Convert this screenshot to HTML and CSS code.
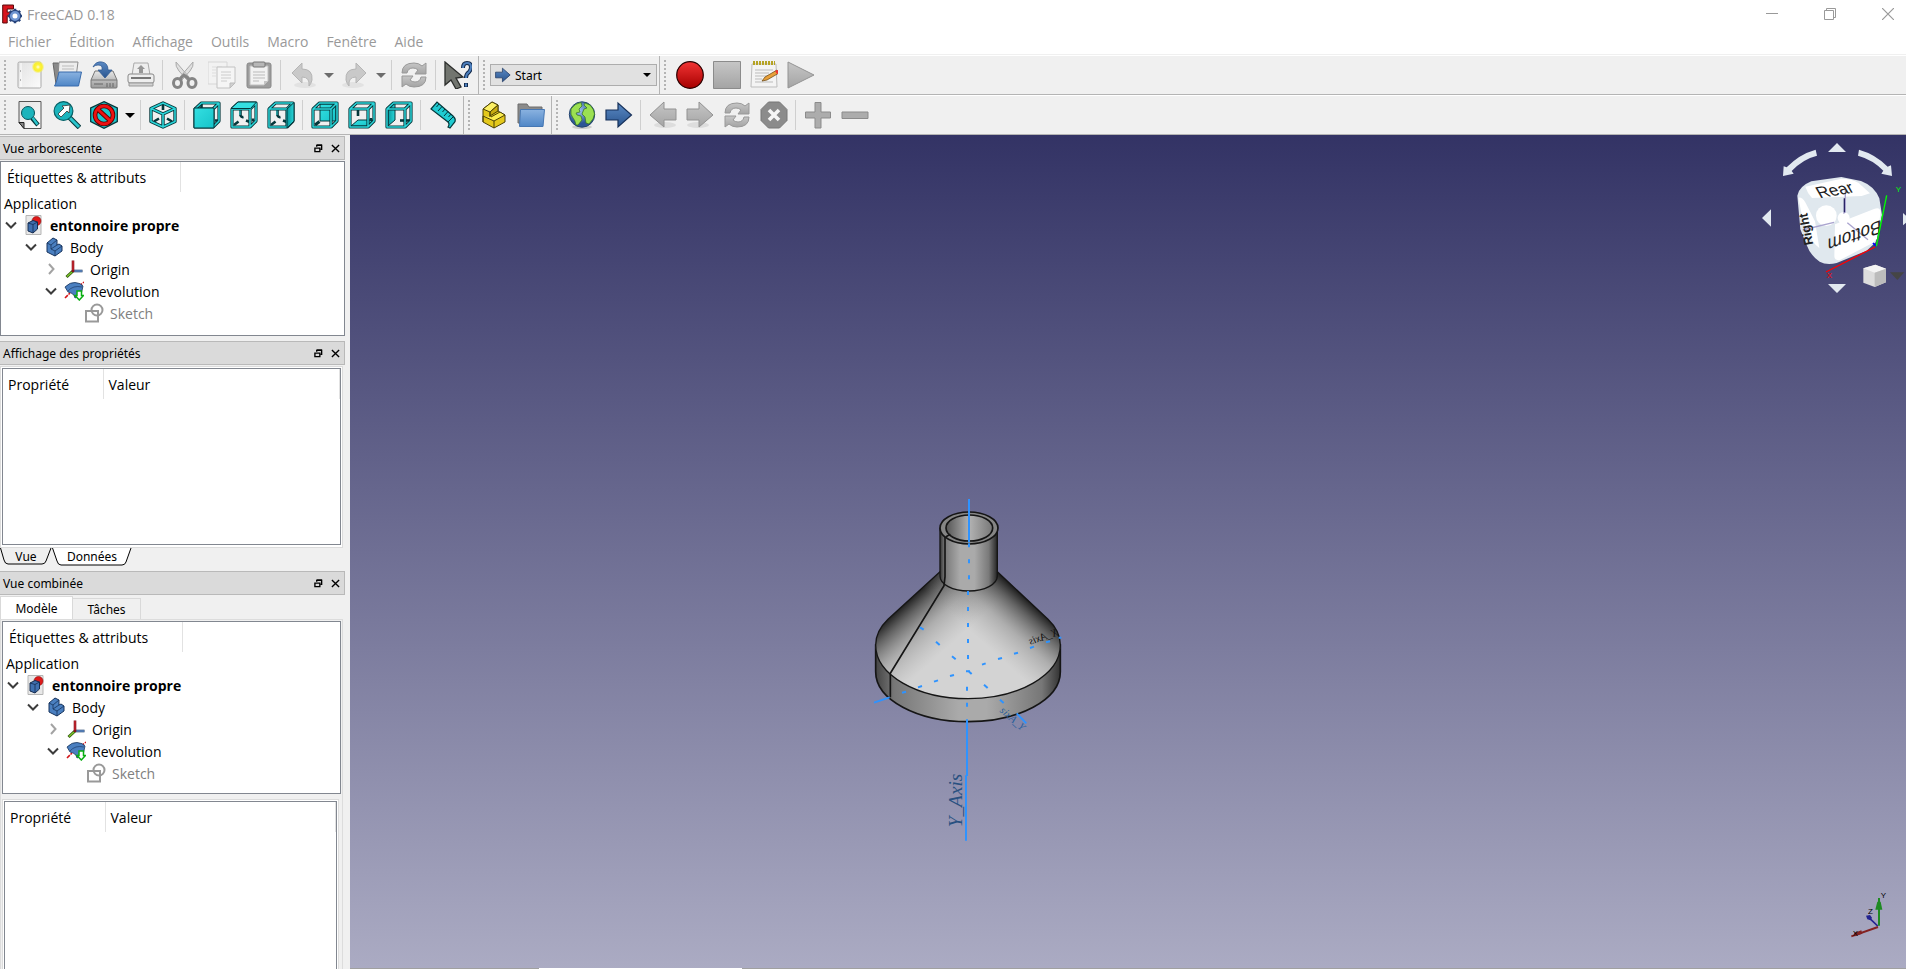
FILE: index.html
```html
<!DOCTYPE html>
<html lang="fr">
<head>
<meta charset="utf-8">
<title>FreeCAD 0.18</title>
<link rel="stylesheet" href="styles.css">
</head>
<body>
<svg class="defs" aria-hidden="true">
  <defs>
    <linearGradient id="paper" x1="0" y1="0" x2="1" y2="1"><stop offset="0" stop-color="#e2e2e2"/><stop offset="1" stop-color="#fbfbfb"/></linearGradient>
    <linearGradient id="grey" x1="0" y1="0" x2="0" y2="1"><stop offset="0" stop-color="#c6c6c6"/><stop offset="1" stop-color="#a4a4a4"/></linearGradient>
    <linearGradient id="drive" x1="0" y1="0" x2="0" y2="1"><stop offset="0" stop-color="#e6e6e6"/><stop offset="1" stop-color="#9a9a9a"/></linearGradient>
    <linearGradient id="blue" x1="0" y1="0" x2="0" y2="1"><stop offset="0" stop-color="#8ab2e0"/><stop offset="1" stop-color="#4f86c6"/></linearGradient>
    <linearGradient id="deep" x1="0" y1="0" x2="0" y2="1"><stop offset="0" stop-color="#5b8ac4"/><stop offset="1" stop-color="#2a558f"/></linearGradient>
    <linearGradient id="red" x1="0" y1="0" x2="0" y2="1"><stop offset="0" stop-color="#f23434"/><stop offset="1" stop-color="#a60000"/></linearGradient>
    <linearGradient id="cyan" x1="0" y1="0" x2="1" y2="1"><stop offset="0" stop-color="#34e0e2"/><stop offset="1" stop-color="#16c3c9"/></linearGradient>
    <linearGradient id="teal" x1="0" y1="0" x2="1" y2="0"><stop offset="0" stop-color="#069a9e"/><stop offset="1" stop-color="#2bd5d9"/></linearGradient>
    <radialGradient id="sun"><stop offset="0" stop-color="#fffde0"/><stop offset=".35" stop-color="#fdf33c"/><stop offset=".65" stop-color="#f8ee30"/><stop offset="1" stop-color="#f8f060" stop-opacity="0"/></radialGradient>
    <radialGradient id="sea" cx=".4" cy=".35"><stop offset="0" stop-color="#9fc3f2"/><stop offset="1" stop-color="#2c5596"/></radialGradient>

    <symbol id="logo" viewBox="0 0 20 20"><path d="M.7 1h10.8v4H5.2v3.2h4.3v3.6H5.2V19H.7z" fill="#d8151d" stroke="#5b0a0c"/><circle cx="13" cy="12" r="4.2" fill="none" stroke="#27447c" stroke-width="4"/><path d="M13 4.800v14.400M5.800 12h14.400M7.900 6.900l10.200 10.200M18.100 6.900 7.900 17.100" stroke="#27447c" stroke-width="2.600"/><circle cx="13" cy="12" r="3.800" fill="#fff" stroke="#6f95d2" stroke-width="2.600"/></symbol>
    <symbol id="new" viewBox="0 0 28 28"><rect x="2" y="1" width="23" height="26" rx="1.500" fill="url(#paper)" stroke="#aaa"/><path d="M5 2v24" stroke="#fff"/><path d="M4 10h1M4 19h1" stroke="#777"/><circle cx="22" cy="6" r="6.500" fill="url(#sun)"/></symbol>
    <symbol id="open" viewBox="0 0 30 28"><path d="M1 2h5l2 2h14v19H4z" fill="#8a8a8a" stroke="#666"/><path d="M7 1h19l-2 15H6z" fill="#ededed" stroke="#8b8b8b"/><path d="M10 5h12M10 8h12" stroke="#bbb"/><path d="M7 11h22.500l-3 14H2.500q2-3 4.500-14z" fill="url(#blue)" stroke="#396bac"/></symbol>
    <symbol id="save" viewBox="0 0 28 28"><path d="M5 10h18l4 9v7q0 1-1 1H2q-1 0-1-1v-7z" fill="url(#drive)" stroke="#777"/><path d="M1 19h26" stroke="#777"/><path d="M4 23h9M17 22v4M20 22v4M23 22v4" stroke="#666"/><path d="M3 6Q6 0 12 1q6 1 6 8h4l-7 8-7-8h4q1-5-4-5-3 0-5 2z" fill="url(#deep)" stroke="#315b93" stroke-width=".8"/></symbol>
    <symbol id="print" viewBox="0 0 28 28"><path d="M5 14 7 2h14l2 12z" fill="#eee" stroke="#aaa"/><path d="m14 4 4 4h-2v4h-4V8h-2z" fill="#969696"/><rect x="1" y="13" width="26" height="9" rx="2" fill="#eee" stroke="#888"/><path d="M4 17h20" stroke="#777" stroke-width="2"/><path d="M2 22h24v3H2z" fill="#d2d2d2" stroke="#999"/></symbol>
    <symbol id="cut" viewBox="0 0 28 28"><path d="M5 1q-1 4 3 9l8 9 2-3zM22 1q1 4-3 9l-8 9-2-3z" fill="#e0e0e0" stroke="#aaa"/><ellipse cx="6.500" cy="22" rx="4" ry="4.500" fill="none" stroke="#858585" stroke-width="3"/><ellipse cx="21" cy="22" rx="4" ry="4.500" fill="none" stroke="#858585" stroke-width="3"/><path d="m9 18 4-4 5 4" fill="none" stroke="#858585" stroke-width="3"/></symbol>
    <symbol id="copy" viewBox="0 0 28 28"><path d="M0 1h19v22H0z" fill="#f2f2f2" stroke="#d6d6d6"/><path d="M4 6h10M4 9h4M4 12h4M4 15h4" stroke="#ddd"/><path d="M9 6h18v16l-5 5H9z" fill="#f5f5f5" stroke="#c2c2c2"/><path d="M13 11h10M13 14h10M13 17h10M13 20h6" stroke="#ccc"/><path d="M22 27v-5h5z" fill="#d0d0d0" stroke="#bbb"/></symbol>
    <symbol id="paste" viewBox="0 0 28 28"><rect x="2" y="2" width="24" height="25" rx="2" fill="#9d9d9d" stroke="#888"/><path d="M5 5h18v15l-4 4H5z" fill="#f2f2f2" stroke="#c0c0c0"/><path d="M8 11h12M8 14h12M8 17h12M8 20h6" stroke="#bbb"/><rect x="8" y="1" width="12" height="5" rx="1" fill="#b7b7b7" stroke="#777"/><path d="M19 24v-4h4z" fill="#c4c4c4"/></symbol>
    <symbol id="undo" viewBox="0 0 28 28"><ellipse cx="16" cy="24" rx="11" ry="3" fill="#e2e2e2"/><path d="M13 2v6q11 0 10 11-1 4-3 6 1-9-7-9v6L3 12z" fill="#c9c9c9" stroke="#b5b5b5"/></symbol>
    <symbol id="redo" viewBox="0 0 28 28"><ellipse cx="12" cy="24" rx="11" ry="3" fill="#e2e2e2"/><path d="M15 2v6Q4 8 5 19q1 4 3 6-1-9 7-9v6l10-10z" fill="#c9c9c9" stroke="#b5b5b5"/></symbol>
    <symbol id="refresh" viewBox="0 0 28 28"><path d="M2 12Q2 2 14 2q5 0 8 3l4-3v11H15l3-4q-2-2-5-2-5 0-6 5z" fill="url(#grey)" stroke="#999"/><path d="M26 16q0 10-12 10-5 0-8-3l-4 3V15h11l-3 4q2 2 5 2 5 0 6-5z" fill="url(#grey)" stroke="#999"/></symbol>
    <symbol id="whats" viewBox="0 0 28 28"><path d="M1 1v23l6-5 5 9 5-2-5-9 7-1z" fill="#72756f" stroke="#2c2e2c" stroke-width="1.300"/><path d="M19 7q0-5 4-5t4 4q0 3-2 5-3 2-3 6M22 22v4" fill="none" stroke="#12294b" stroke-width="4"/><path d="M19 7q0-5 4-5t4 4q0 3-2 5-3 2-3 6M22 22.500v3" fill="none" stroke="#4e80be" stroke-width="2"/></symbol>
    <symbol id="record" viewBox="0 0 28 28"><circle cx="14" cy="14" r="13.300" fill="url(#red)" stroke="#2a0000" stroke-width="1.200"/></symbol>
    <symbol id="stop" viewBox="0 0 28 28"><path d="M.5.500h27v27H.5z" fill="url(#grey)" stroke="#8b8b8b"/></symbol>
    <symbol id="note" viewBox="0 0 28 28"><path d="M2 3h24l1 23H1z" fill="#f4f4f4" stroke="#bdbdbd"/><path d="M3 2h22" stroke="#b5a324" stroke-width="4" stroke-dasharray="2 1"/><path d="M5 9h18M5 12h14M5 15h14M5 18h7M5 21h18" stroke="#bbb"/><path d="m12 20 3-4 12-7 2 3-12 7z" fill="#e8a039" stroke="#75501c" stroke-width=".8"/><path d="m25 10 2-1q2 1 2 3l-2 1z" fill="#e33"/></symbol>
    <symbol id="play" viewBox="0 0 28 28"><path d="M1 1v26l26-13z" fill="url(#grey)" stroke="#949494"/></symbol>
    <symbol id="fit" viewBox="0 0 28 28"><path d="M3 .500h22v27H8l-5-6z" fill="url(#paper)" stroke="#555"/><path d="M3 21.500h5v6z" fill="#888" stroke="#222"/><path d="m16 17 6 7" stroke="#05373b" stroke-width="4.400"/><path d="m16 16 5.500 7.500" stroke="#2bc5cc" stroke-width="2.400"/><circle cx="12" cy="12" r="6.500" fill="#1cb4bc" stroke="#06535a"/></symbol>
    <symbol id="sel" viewBox="0 0 28 28"><path d="m16 16 10.500 10.500" stroke="#05373b" stroke-width="5"/><path d="m16 16 10 10" stroke="#2bc5cc" stroke-width="3"/><circle cx="10.500" cy="10" r="9.400" fill="#1cb4bc" stroke="#086066" stroke-width="1.200"/><path d="m5 13 6-6-2-2 8-1-1 8-2-2-6 6z" fill="#fff" stroke="#333" stroke-width=".8"/></symbol>
    <symbol id="style" viewBox="0 0 28 28"><path d="M14 .700 27.300 7v13.500L14 27.300.7 20.500V7z" fill="#1cc5cb" stroke="#05373b" stroke-width="1.300"/><g fill="none"><circle cx="14" cy="14" r="9" stroke="#5d0000" stroke-width="4.600"/><path d="m7.500 8 13 12" stroke="#5d0000" stroke-width="4.600"/><circle cx="14" cy="14" r="9" stroke="#e11" stroke-width="2.800"/><path d="m7.500 8 13 12" stroke="#e11" stroke-width="2.800"/></g></symbol>
    <symbol id="iso" viewBox="0 0 28 28"><g fill="none" stroke-linejoin="round"><path d="M14 4v5M5 20.500l5-3M23 20.500l-5-3" stroke="#05373b" stroke-width="2.600"/><path d="M14 2 26 7.500v13L14 26 2 20.500v-13zM2 7.500 14 13l12-5.500M14 13v13" stroke="#05373b" stroke-width="3.400"/><path d="M14 2 26 7.500v13L14 26 2 20.500v-13zM2 7.500 14 13l12-5.500M14 13v13" stroke="#2bd5d9" stroke-width="1.600"/></g></symbol>

    <g id="back" fill="none"><path d="M10.500 8v6.500q1 2 3 1.500M4 24l4.500-3.500M16 19.500l4 1.500M23 17.500v3" stroke="#05373b" stroke-width="2.600"/><path d="M10 9v5" stroke="#2bd5d9"/></g>
    <g id="wire" fill="none" stroke-linejoin="round"><path d="M2 8h18v18H2zM2 8l6.500-6H26v18l-6 6M20 8l6-6" stroke="#05373b" stroke-width="3.200"/><path d="M2 8h18v18H2zM2 8l6.500-6H26v18l-6 6M20 8l6-6" stroke="#2bd5d9" stroke-width="1.500"/></g>
    <symbol id="front" viewBox="0 0 28 28"><path d="M8.500 3v5M22 19.500h3" stroke="#05373b" stroke-width="2.600"/><use href="#wire"/><path d="M1 7h20v20H1z" fill="url(#cyan)" stroke="#05373b"/></symbol>
    <symbol id="top" viewBox="0 0 28 28"><use href="#back"/><use href="#wire"/><path d="m1 7.500 7-6.500h18.500l-6 6.500z" fill="#34e0e2" stroke="#05373b"/></symbol>
    <symbol id="right" viewBox="0 0 28 28"><use href="#back"/><use href="#wire"/><path d="m20 8 7-6.500V20l-7 7z" fill="url(#teal)" stroke="#05373b"/></symbol>
    <symbol id="rear" viewBox="0 0 28 28"><path d="M9 3h16v17H9z" fill="url(#cyan)" stroke="#05373b"/><path d="m4 24 4.500-3.500" stroke="#05373b" stroke-width="3"/><use href="#wire"/></symbol>
    <symbol id="bottom" viewBox="0 0 28 28"><path d="m3 25 7-6h15l-5 6z" fill="url(#cyan)" stroke="#05373b"/><path d="M10 8v7M23 17v3" stroke="#05373b" stroke-width="2.600"/><use href="#wire"/></symbol>
    <symbol id="left" viewBox="0 0 28 28"><path d="m3 8 7-6v17l-7 6z" fill="url(#teal)" stroke="#05373b"/><path d="M15 19.500h10" stroke="#05373b" stroke-width="2.600"/><use href="#wire"/></symbol>
    <symbol id="measure" viewBox="0 0 28 28"><path d="m2 8 6-7 16 14q4 4 1 7l-4 5-2-1q2-3 0-5z" fill="#20cbd1" stroke="#05373b" stroke-width="1.200"/><path d="m19 21 5-5M10 3 7.500 6M13 5.500l-4 4.500M16 8l-2.500 3M19 10.500l-4 4.500M22 13l-2.500 3" fill="none" stroke="#05373b"/></symbol>
    <symbol id="part" viewBox="0 0 28 28"><g stroke="#4b4106" stroke-linejoin="round"><path d="M3 8 12 1l6 3v6l5 3 2 1v7L14 27 3 21z" fill="#e4c81b"/><path d="m3 8 9-7 6 3-8 7z" fill="#fcf065"/><path d="m10 11 8-7v6l-8 5z" fill="#c9ac10"/><path d="m3 15 11 5 11-6-5-3-9 5" fill="#fbec4e"/><path d="M14 20v7M3 15v6M10 11v5" fill="none"/></g></symbol>
    <symbol id="group" viewBox="0 0 28 28"><path d="M1 3h9l2 3h13v16H1z" fill="#8a8a8a" stroke="#6d6d6d"/><path d="M3.500 8.500h24L26 25.500H2.500z" fill="url(#blue)" stroke="#4677b3"/></symbol>
    <symbol id="web" viewBox="0 0 28 28"><ellipse cx="14" cy="26" rx="10" ry="2" fill="#ccc"/><circle cx="14" cy="13.500" r="12.700" fill="url(#sea)" stroke="#24456f"/><path d="M3 8q4-6 10-6.500l1 3.500-3 3 1 3-4 1 1 2 4 1 1 4-4 5-2 0q-1-5-3-7-3-3-2-9zM17 2l5 2q4 4 4.500 9l-1.500 5-4 5-3-1-1-6-3-3 2-5 3-1-3-3z" fill="#9be052" stroke="#33701e" stroke-width=".7"/></symbol>
    <symbol id="go" viewBox="0 0 28 28"><path d="M1 9h12V2l13.500 12L13 26v-7H1z" fill="url(#deep)" stroke="#17315a" stroke-width="1.200"/></symbol>
    <symbol id="prev" viewBox="0 0 28 28"><ellipse cx="16" cy="24" rx="11" ry="3" fill="#ddd"/><path d="M27 8H15V1L1 14l14 12v-7h12z" fill="url(#grey)" stroke="#929292"/></symbol>
    <symbol id="next" viewBox="0 0 28 28"><ellipse cx="12" cy="24" rx="11" ry="3" fill="#ddd"/><path d="M1 8h12V1l14 13-14 12v-7H1z" fill="url(#grey)" stroke="#929292"/></symbol>
    <symbol id="cancel" viewBox="0 0 28 28"><path d="M8.500 1h11L27 8.500v11L19.500 27h-11L1 19.500v-11z" fill="#8b8b8b" stroke="#777"/><path d="m9 9 10 10M19 9 9 19" stroke="#f5f5f5" stroke-width="3.600"/></symbol>
    <symbol id="plus" viewBox="0 0 28 28"><path d="M11 1.500h6V11h9.500v6H17v10h-6V17H1.500v-6H11z" fill="#acacac" stroke="#8b8b8b"/></symbol>
    <symbol id="minus" viewBox="0 0 28 28"><path d="M1 11h26v6.500H1z" fill="#acacac" stroke="#8b8b8b"/></symbol>

    <symbol id="doc" viewBox="0 0 20 20"><path d="M2 .500h15v19H2z" fill="#e8e8e8" stroke="#b5b5b5"/><circle cx="12.500" cy="6" r="4.500" fill="#dd1a1a" stroke="#8d0b0b" stroke-width=".6"/><path d="m4 8 5-2.500 4.500 1.500v7L9 18l-5-2z" fill="#4070b0" stroke="#152c50"/><path d="m4 8 5 1.500L13.500 7M9 9.500V18" fill="none" stroke="#152c50" stroke-width=".8"/></symbol>
    <symbol id="body" viewBox="0 0 20 20"><path d="m3 6 6-5 4 2v5l2-1 3 2v5l-7 5-8-4z" fill="#4a7fc0" stroke="#17335c"/><path d="m3 6 4 2 6-5M7 8v4l4 2 7-5M11 14v5M7 12l6-4" fill="none" stroke="#17335c" stroke-width=".8"/></symbol>
    <symbol id="origin" viewBox="0 0 20 20"><path d="M9 12h9.500" stroke="#1d3c68" stroke-width="2.600"/><path d="M9 12h9" stroke="#6f9bd8" stroke-width="1.300"/><path d="m9 12-6.500 6" stroke="#30520c" stroke-width="3"/><path d="m8 13-5 4.500" stroke="#7bc62c" stroke-width="1.600"/><path d="M9 13V1.500" stroke="#84131b" stroke-width="2.600"/><path d="M9 11V2" stroke="#d02a34" stroke-width="1.200"/></symbol>
    <symbol id="rev" viewBox="0 0 20 20"><path d="m1 17 5-5M15 5l5-4" stroke="#d41418" stroke-width="1.600" stroke-dasharray="4 1"/><path d="M1 6q5-5 10-4.500 6 .500 8 3.500l-2 9-6 3q-1-5-7-6z" fill="#4a7fc0" stroke="#17335c" stroke-width=".8"/><path d="M4 10q5-6 14-4" fill="none" stroke="#17335c" stroke-width=".6"/><path d="M13 10h4.500v4.500h2L15.300 19 11 14.500h2z" fill="#fff" stroke="#0aaf12" stroke-width="1.500"/></symbol>
    <symbol id="sketch" viewBox="0 0 20 20"><path d="M2 8h12v10.500H2z" fill="none" stroke="#999" stroke-width="2"/><circle cx="13" cy="7" r="5.500" fill="none" stroke="#999" stroke-width="2"/></symbol>
    <symbol id="down" viewBox="0 0 12 12"><path d="m1 3.500 5 5 5-5" fill="none" stroke="#3c3c3c" stroke-width="2"/></symbol>
    <symbol id="side" viewBox="0 0 12 12"><path d="m4 1 4.500 5L4 11" fill="none" stroke="#a3a3a3" stroke-width="2"/></symbol>
    <symbol id="float" viewBox="0 0 10 10"><path d="M3 3V1.500h5.500V6H7M3 1h6" fill="none" stroke="#000" stroke-width="1.500"/><path d="M1 4.500h5.500v4H1z" fill="none" stroke="#000" stroke-width="1.500"/></symbol>
    <symbol id="cross" viewBox="0 0 10 10"><path d="m1 1 8 8M9 1 1 9" stroke="#000" stroke-width="1.500"/></symbol>
  </defs>
</svg>

<div class="app">
  <header class="titlebar">
    <svg class="logo"><use href="#logo"/></svg>
    <h1 class="title">FreeCAD 0.18</h1>
    <div class="winbtns">
      <button aria-label="Réduire"><svg viewBox="0 0 12 12"><path d="M0 5.500h12" stroke="#999"/></svg></button>
      <button aria-label="Restaurer"><svg viewBox="0 0 12 12" fill="none" stroke="#999"><path d="M.5 2.500h9v9h-9zM2.500 2V.500h9v9H10"/></svg></button>
      <button aria-label="Fermer"><svg viewBox="0 0 12 12"><path d="m0 0 12 12M12 0 0 12" stroke="#999" stroke-width="1.200"/></svg></button>
    </div>
  </header>
  <nav class="menubar" aria-label="Menu">
    <button>Fichier</button><button>Édition</button><button>Affichage</button><button>Outils</button><button>Macro</button><button>Fenêtre</button><button>Aide</button>
  </nav>

  <div class="toolrow">
    <div class="toolbar">
      <span class="grip"></span>
      <button class="tool" aria-label="Nouveau"><svg><use href="#new"/></svg></button>
      <button class="tool" aria-label="Ouvrir"><svg class="wide"><use href="#open"/></svg></button>
      <button class="tool" aria-label="Enregistrer"><svg><use href="#save"/></svg></button>
      <button class="tool" aria-label="Imprimer"><svg><use href="#print"/></svg></button>
      <span class="sep"></span>
      <button class="tool" aria-label="Couper"><svg><use href="#cut"/></svg></button>
      <button class="tool" aria-label="Copier"><svg><use href="#copy"/></svg></button>
      <button class="tool" aria-label="Coller"><svg><use href="#paste"/></svg></button>
      <span class="sep"></span>
      <button class="tool" aria-label="Annuler"><svg><use href="#undo"/></svg></button>
      <button class="caret dim" aria-label="Liste des annulations"></button>
      <button class="tool" aria-label="Rétablir"><svg><use href="#redo"/></svg></button>
      <button class="caret dim" aria-label="Liste des rétablissements"></button>
      <span class="sep"></span>
      <button class="tool" aria-label="Rafraîchir"><svg><use href="#refresh"/></svg></button>
      <span class="sep"></span>
      <button class="tool" aria-label="Qu'est-ce que c'est ?"><svg><use href="#whats"/></svg></button>
    </div>
    <div class="toolbar">
      <span class="grip"></span>
      <div class="combo">
        <svg><use href="#go"/></svg>
        <select aria-label="Atelier"><option>Start</option></select>
      </div>
    </div>
    <div class="toolbar last">
      <span class="grip"></span>
      <button class="tool" aria-label="Enregistrer une macro"><svg><use href="#record"/></svg></button>
      <button class="tool" aria-label="Arrêter"><svg><use href="#stop"/></svg></button>
      <button class="tool" aria-label="Macros"><svg><use href="#note"/></svg></button>
      <button class="tool" aria-label="Exécuter"><svg><use href="#play"/></svg></button>
    </div>
  </div>
  <div class="toolrow">
    <div class="toolbar">
      <span class="grip"></span>
      <button class="tool" aria-label="Tout afficher"><svg><use href="#fit"/></svg></button>
      <button class="tool" aria-label="Afficher la sélection"><svg><use href="#sel"/></svg></button>
      <button class="tool" aria-label="Style de représentation"><svg><use href="#style"/></svg></button>
      <button class="caret" aria-label="Choisir le style"></button>
      <span class="sep"></span>
      <button class="tool" aria-label="Isométrique"><svg><use href="#iso"/></svg></button>
      <span class="sep"></span>
      <button class="tool" aria-label="Avant"><svg><use href="#front"/></svg></button>
      <button class="tool" aria-label="Dessus"><svg><use href="#top"/></svg></button>
      <button class="tool" aria-label="Droite"><svg><use href="#right"/></svg></button>
      <span class="sep"></span>
      <button class="tool" aria-label="Arrière"><svg><use href="#rear"/></svg></button>
      <button class="tool" aria-label="Dessous"><svg><use href="#bottom"/></svg></button>
      <button class="tool" aria-label="Gauche"><svg><use href="#left"/></svg></button>
      <span class="sep"></span>
      <button class="tool" aria-label="Mesurer"><svg><use href="#measure"/></svg></button>
    </div>
    <div class="toolbar">
      <span class="grip"></span>
      <button class="tool" aria-label="Créer une pièce"><svg><use href="#part"/></svg></button>
      <button class="tool" aria-label="Créer un groupe"><svg><use href="#group"/></svg></button>
    </div>
    <div class="toolbar last">
      <span class="grip"></span>
      <button class="tool" aria-label="Page web"><svg><use href="#web"/></svg></button>
      <button class="tool" aria-label="Page de démarrage"><svg><use href="#go"/></svg></button>
      <span class="sep"></span>
      <button class="tool" aria-label="Précédent"><svg><use href="#prev"/></svg></button>
      <button class="tool" aria-label="Suivant"><svg><use href="#next"/></svg></button>
      <button class="tool" aria-label="Actualiser"><svg><use href="#refresh"/></svg></button>
      <button class="tool" aria-label="Interrompre"><svg><use href="#cancel"/></svg></button>
      <span class="sep"></span>
      <button class="tool" aria-label="Zoom avant"><svg><use href="#plus"/></svg></button>
      <button class="tool" aria-label="Zoom arrière"><svg><use href="#minus"/></svg></button>
    </div>
  </div>

  <div class="work">
    <aside class="side">
      <section class="dock">
        <div class="docktitle"><h2>Vue arborescente</h2><button aria-label="Détacher"><svg><use href="#float"/></svg></button><button aria-label="Fermer"><svg><use href="#cross"/></svg></button></div>
        <div class="box treebox">
          <div class="colhead">Étiquettes &amp; attributs</div>
          <ul class="tree">
            <li>Application</li>
            <li class="l1"><svg class="arw"><use href="#down"/></svg><svg class="ico"><use href="#doc"/></svg><b>entonnoire propre</b></li>
            <li class="l2"><svg class="arw"><use href="#down"/></svg><svg class="ico"><use href="#body"/></svg>Body</li>
            <li class="l3"><svg class="arw"><use href="#side"/></svg><svg class="ico"><use href="#origin"/></svg>Origin</li>
            <li class="l3"><svg class="arw"><use href="#down"/></svg><svg class="ico"><use href="#rev"/></svg>Revolution</li>
            <li class="l4 off"><svg class="arw"></svg><svg class="ico"><use href="#sketch"/></svg>Sketch</li>
          </ul>
        </div>
      </section>

      <section class="dock">
        <div class="docktitle"><h2>Affichage des propriétés</h2><button aria-label="Détacher"><svg><use href="#float"/></svg></button><button aria-label="Fermer"><svg><use href="#cross"/></svg></button></div>
        <div class="pane props">
          <div class="box">
            <table class="grid"><thead><tr><th class="name">Propriété</th><th>Valeur</th></tr></thead></table>
          </div>
        </div>
        <div class="lowtabs">
          <button class="vue"><svg viewBox="0 0 52 18" preserveAspectRatio="none"><path d="M.5 0 4 12q1 4 4 4h34q3 0 4-3L51 0" fill="#efefef" stroke="#000"/></svg><span>Vue</span></button>
          <button class="data"><svg viewBox="0 0 80 18" preserveAspectRatio="none"><path d="M.5 0 5 13q1 4 4 4h61q3 0 4-3L79 0" fill="#fff" stroke="#000"/></svg><span>Données</span></button>
        </div>
      </section>

      <section class="dock grow">
        <div class="docktitle"><h2>Vue combinée</h2><button aria-label="Détacher"><svg><use href="#float"/></svg></button><button aria-label="Fermer"><svg><use href="#cross"/></svg></button></div>
        <div class="tabs"><button class="on">Modèle</button><button>Tâches</button></div>
        <div class="pane combined">
          <div class="box treebox short">
            <div class="colhead">Étiquettes &amp; attributs</div>
            <ul class="tree">
              <li>Application</li>
              <li class="l1"><svg class="arw"><use href="#down"/></svg><svg class="ico"><use href="#doc"/></svg><b>entonnoire propre</b></li>
              <li class="l2"><svg class="arw"><use href="#down"/></svg><svg class="ico"><use href="#body"/></svg>Body</li>
              <li class="l3"><svg class="arw"><use href="#side"/></svg><svg class="ico"><use href="#origin"/></svg>Origin</li>
              <li class="l3"><svg class="arw"><use href="#down"/></svg><svg class="ico"><use href="#rev"/></svg>Revolution</li>
              <li class="l4 off"><svg class="arw"></svg><svg class="ico"><use href="#sketch"/></svg>Sketch</li>
            </ul>
          </div>
          <div class="pane inner">
            <div class="box">
              <table class="grid"><thead><tr><th class="name">Propriété</th><th>Valeur</th></tr></thead></table>
            </div>
          </div>
        </div>
      </section>
    </aside>

    <main class="view">
      <svg class="model" viewBox="0 0 660 1080" role="img" aria-label="Entonnoir">
        <defs>
          <linearGradient id="tube"><stop offset="0" stop-color="#333"/><stop offset=".08" stop-color="#777"/><stop offset=".35" stop-color="#aaa"/><stop offset=".6" stop-color="#aaa"/><stop offset=".85" stop-color="#7a7a7a"/><stop offset="1" stop-color="#252525"/></linearGradient>
          <linearGradient id="bore"><stop offset="0" stop-color="#555"/><stop offset=".5" stop-color="#b2b2b2"/><stop offset="1" stop-color="#777"/></linearGradient>
          <linearGradient id="rim"><stop offset="0" stop-color="#444"/><stop offset=".1" stop-color="#777"/><stop offset=".45" stop-color="#aaa"/><stop offset=".6" stop-color="#aaa"/><stop offset=".9" stop-color="#777"/><stop offset="1" stop-color="#333"/></linearGradient>
          <linearGradient id="shadeL" gradientUnits="userSpaceOnUse" x1="152" y1="322" x2="277" y2="460"><stop offset="0" stop-color="#1c1c1c"/><stop offset=".2" stop-color="#3c3c3c" stop-opacity=".75"/><stop offset=".55" stop-color="#777" stop-opacity=".4"/><stop offset="1" stop-color="#999" stop-opacity="0"/></linearGradient>
          <linearGradient id="shadeR" gradientUnits="userSpaceOnUse" x1="496" y1="322" x2="371" y2="460"><stop offset="0" stop-color="#1c1c1c"/><stop offset=".2" stop-color="#3c3c3c" stop-opacity=".75"/><stop offset=".55" stop-color="#777" stop-opacity=".4"/><stop offset="1" stop-color="#999" stop-opacity="0"/></linearGradient>
          <path id="hull" d="M240 245 84 388c-25 24-37 50-37 77 0 90 125 161 277 161s277-71 277-161c0-27-12-53-37-77L412 245z"/>
        </defs>
        <path d="M47 465v80c0 84 125 150 277 150s277-66 277-150v-80z" fill="url(#rim)" stroke="#151515" stroke-width="5"/>
        <use href="#hull" fill="#d3d3d3"/>
        <use href="#hull" fill="url(#shadeL)"/>
        <use href="#hull" fill="url(#shadeR)"/>
        <use href="#hull" fill="none" stroke="#151515" stroke-width="4"/>
        <path d="M240 115v143c0 25 38 45 86 45s86-20 86-45V115z" fill="url(#tube)" stroke="#151515" stroke-width="4"/>
        <ellipse cx="327" cy="114" rx="87" ry="48" fill="#858585" stroke="#151515" stroke-width="5"/>
        <ellipse cx="328" cy="114" rx="70" ry="39" fill="url(#bore)" stroke="#151515" stroke-width="5"/>
        <path d="M255 140v120l-3 27L91 550v72M258 140l13-7" fill="none" stroke="#151515" stroke-width="5"/>
        <g fill="none" stroke="#2e93ff" stroke-width="6">
          <path d="M327 27v130M321 688v170M318 856v196M42 638l47-16M470 670l29 30"/>
          <path d="M327 160v120M324 303v240M321 590v70" stroke-dasharray="12 36"/>
          <path d="M180 412l11 7M228 455l11 10M276 499l11 9M324 542l11 10M372 584l11 10M420 629l11 10M318 544h12M366 524l11-4M414 507l12-3M462 491l12-3M510 474l12-4M558 457l12-3M270 558l12-3M222 575l12-4M174 592l12-4M126 608l12-3M596 443h8"/>
        </g>
        <g class="axes">
          <text transform="translate(596 436) rotate(-18) scale(-1 1)" fill="#111">X_Axis</text>
          <text transform="translate(418 664) rotate(42)" fill="#285f9c">sixA_Y</text>
          <text class="big" transform="translate(306 1012) rotate(-90)" fill="#285080">Y_Axis</text>
        </g>
      </svg>

      <svg class="cube" viewBox="0 0 498 510" role="img" aria-label="Cube de navigation">
        <g fill="#e2e9f0">
          <path d="m291 24 27 27h-54zM291 474l27-27h-54zM66 249l27-26v52zM489 234l9 8v21l-9 8z"/>
          <path d="M227 44q-50 14-87 53l-9-3-2 29 32-7-6-8q34-36 76-46zM357 44q50 14 86 51l10-4 3 32-32-7 6-9q-32-33-76-45z"/>
        </g>
        <path d="M172 182q5-28 42-43l90-13 59 12q40 15 55 52l8 51-19 81-27 25-90 37q-30 8-51-4-28-19-38-48l-20-49z" fill="#e0e8ee"/>
        <path d="m196 155 108-24q32 0 52 13l34 31-25 8-149 6q-14-15-20-34zM175 188q12-2 22 16l28 55 13 80q-25-19-35-52l-18-50zM285 268l117-46q18-8 20 9l-11 80-13 13-98 51q-16 3-17-11z" fill="#fff"/>
        <circle cx="259" cy="242" r="31" fill="#fff"/>
        <circle cx="311" cy="249" r="18" fill="#fff"/>
        <path d="M316 165v66l-6 4M188 285l94-23M322 263l62 51" fill="none" stroke="#aaa4cf" stroke-width="4"/>
        <path d="M313 190v42" stroke="#282365" stroke-width="4"/>
        <g class="faces">
          <text class="rear" transform="translate(240 190) rotate(-10) skewX(20)">Rear</text>
          <text transform="translate(424 254) rotate(160) skewX(-20)">Bottom</text>
          <text class="left" transform="translate(220 328) rotate(-101)">Right</text>
        </g>
        <path d="m258 411 147-75" stroke="red" stroke-width="4"/><path d="m409 333 31-152" stroke="#0f0" stroke-width="4"/><path d="m399 324 8 8" stroke="#00f" stroke-width="5"/>
        <text class="lab" x="260" y="430" fill="red">X</text><text class="lab" x="467" y="172" fill="#0f0">Y</text>
        <path d="m370 400 36-11 32 12v41l-34 14-34-13z" fill="#ddd"/><path d="m370 400 36-11 32 12-34 12z" fill="#f4f4f4"/><path d="m404 413 34-12v41l-34 14z" fill="#bcbcbc"/>
        <path d="M450 412h43l-21 23z" fill="#454545"/>
      </svg>

      <svg class="axis" viewBox="0 0 228 297" role="img" aria-label="Axes">
        <path d="M147 167V84" stroke="#1e8a22" stroke-width="6"/><path d="m136 119 6-24h10l5 24z" fill="#1e8a22"/>
        <path d="m143 168-24-23" stroke="#222290" stroke-width="5"/><path d="m108 137 12-2 6 8-4 8-10-3z" fill="#222290"/>
        <path d="m144 171-80 28" stroke="#842222" stroke-width="6"/><path d="m72 189 22-8 3 10-22 8z" fill="#842222"/>
        <text x="152" y="84">Y</text><text x="114" y="132">Z</text><text x="68" y="198">X</text>
      </svg>
      <div class="edge"><span></span></div>
    </main>
  </div>
</div>
</body>
</html>
```
FILE: styles.css
```css
* { box-sizing: border-box; }
html, body { height: 100%; margin: 0; }
body { font-family: "Open Sans", "Noto Sans", sans-serif; font-size: 14px; color: #000; overflow: hidden; }
button { font: inherit; color: inherit; border: 0; padding: 0; margin: 0; background: none; }
h1, h2 { margin: 0; font-weight: normal; }
svg { display: block; }
.defs { position: absolute; width: 0; height: 0; }

.app { display: flex; flex-direction: column; height: 100vh; background: #f0f0f0; }

.titlebar { display: flex; align-items: center; height: 28px; padding-left: 2px; background: #fff; color: #999; }
.logo { width: 20px; height: 20px; margin-right: 5px; }
.title { font-size: 14px; }
.winbtns { display: flex; gap: 46px; margin-left: auto; padding-right: 12px; }
.winbtns button { width: 12px; height: 28px; display: grid; place-items: center; }
.winbtns svg { width: 12px; height: 12px; }

.menubar { display: flex; gap: 2px; height: 27px; background: #fff; color: #999; border-bottom: 1px solid #f0f0f0; }
.menubar button { padding: 0 8px; }

.toolrow { display: flex; height: 40px; border-top: 1px solid #fff; border-bottom: 1px solid #b4b4b4; }
.toolbar { display: flex; align-items: center; border-right: 1px solid #b4b4b4; padding-right: 2px; }
.toolbar.last { flex: 1; border-right: 0; }
.grip { width: 2px; height: 30px; margin: 0 5px 0 4px; background: repeating-linear-gradient(#b4b4b4 0 2px, transparent 2px 4px); }
.tool { width: 37px; height: 37px; display: grid; place-items: center; }
.tool svg { width: 28px; height: 28px; }
.tool svg.wide { width: 30px; }
.sep { width: 1px; height: 30px; margin: 0 3px; background: #cfcfcf; }
.caret { width: 15px; height: 37px; display: grid; place-items: center; }
.caret::before { content: ""; border: 5px solid transparent; border-top-color: #000; border-bottom: 0; }
.caret.dim::before { border-top-color: #6c6c6c; }
.combo { position: relative; width: 167px; height: 22px; }
.combo::after { content: ""; position: absolute; right: 6px; top: 9px; border: 4px solid transparent; border-top-color: #000; border-bottom: 0; }
.combo svg { position: absolute; left: 5px; top: 3px; width: 16px; height: 16px; }
.combo select { appearance: none; display: block; width: 100%; height: 100%; padding: 0 0 0 24px; border: 1px solid #adadad; border-radius: 0; background: #e1e1e1; color: #000; font: 12px "Noto Sans", sans-serif; }

.work { flex: 1; min-height: 0; display: flex; padding-top: 1px; }
.side { width: 350px; padding-right: 5px; display: flex; flex-direction: column; gap: 5px; overflow: hidden; }
.dock { display: flex; flex-direction: column; }
.dock.grow { flex: 1; min-height: 0; }
.docktitle { display: flex; align-items: center; height: 24px; padding-left: 3px; border: 1px solid #b9b9b9; border-left: 0; background: #dadada; }
.docktitle h2 { flex: 1; font: 12px "Noto Sans", sans-serif; }
.docktitle button { width: 17px; height: 16px; display: grid; place-items: center; }
.docktitle svg { width: 9px; height: 9px; }

.box { background: #fff; border: 1px solid #828790; }
.treebox { margin-top: 1px; height: 175px; }
.treebox.short { margin-top: 0; height: 173px; }
.colhead { width: 180px; height: 30px; padding-left: 6px; line-height: 32px; border-right: 1px solid #e2e2e2; }
.tree { list-style: none; margin: 0; padding: 0; }
.tree li { display: flex; align-items: center; height: 22px; padding-left: 3px; }
.tree .l1 { padding-left: 0; }
.tree .l2 { padding-left: 20px; }
.tree .l3 { padding-left: 40px; }
.tree .l4 { padding-left: 60px; }
.tree .off { color: #808080; }
.arw { width: 12px; height: 12px; margin: 0 4px; }
.ico { width: 20px; height: 20px; margin: 0 6px 0 3px; }

.pane { border: 1px solid #dcdcdc; background: #fff; padding: 1px; }
.props { margin: 1px 2px 0 0; height: 182px; }
.props .box { height: 177px; }
.grid { width: 100%; border-collapse: collapse; font-size: 14px; }
.grid th { height: 30px; padding: 0 0 0 5px; text-align: left; font-weight: normal; border-right: 1px solid #e2e2e2; }
.grid .name { width: 100px; }

.lowtabs { display: flex; height: 18px; font: 12px/16px "Noto Sans", sans-serif; }
.lowtabs button { position: relative; height: 18px; }
.lowtabs svg { position: absolute; inset: 0; width: 100%; height: 100%; }
.lowtabs span { position: relative; }
.vue { width: 52px; }
.data { width: 80px; }

.tabs { display: flex; align-items: flex-end; height: 23px; margin-top: 1px; font: 12px "Noto Sans", sans-serif; }
.tabs button { width: 68px; height: 21px; border: 1px solid #d9d9d9; border-left: 0; border-bottom: 0; }
.tabs .on { width: 73px; height: 23px; background: #fff; border-left: 1px solid #d9d9d9; }
.combined { flex: 1; min-height: 0; margin-right: 2px; border-bottom: 0; padding-bottom: 0; display: flex; flex-direction: column; background: #f0f0f0; }
.inner { flex: 1; min-height: 0; margin: 5px 2px 0 0; border-bottom: 0; padding-bottom: 0; }
.inner .box { height: 100%; border-bottom: 0; }

.view { position: relative; flex: 1; margin-top: -1px; overflow: hidden; background: linear-gradient(#333365, #ababc3); }
.model { position: absolute; left: 510px; top: 355px; width: 220px; height: 360px; }
.axes text { font: italic 32px "Liberation Serif", serif; }
.axes .big { font-size: 58px; }
.cube { position: absolute; right: 0; top: 0; width: 166px; height: 170px; }
.faces text { font: 54px "Liberation Sans", sans-serif; fill: #222; }
.faces .rear { font-size: 50px; }
.faces .left { font-size: 38px; font-weight: bold; }
.lab { font: 24px "Liberation Sans", sans-serif; }
.axis { position: absolute; right: 0; bottom: 0; width: 76px; height: 99px; }
.axis text { font: 24px "Liberation Sans", sans-serif; }
.edge { position: absolute; left: 0; right: 0; bottom: 0; height: 1px; background: #a0a0a0; padding-left: 189px; }
.edge span { display: block; width: 203px; height: 1px; background: #fff; }
```
